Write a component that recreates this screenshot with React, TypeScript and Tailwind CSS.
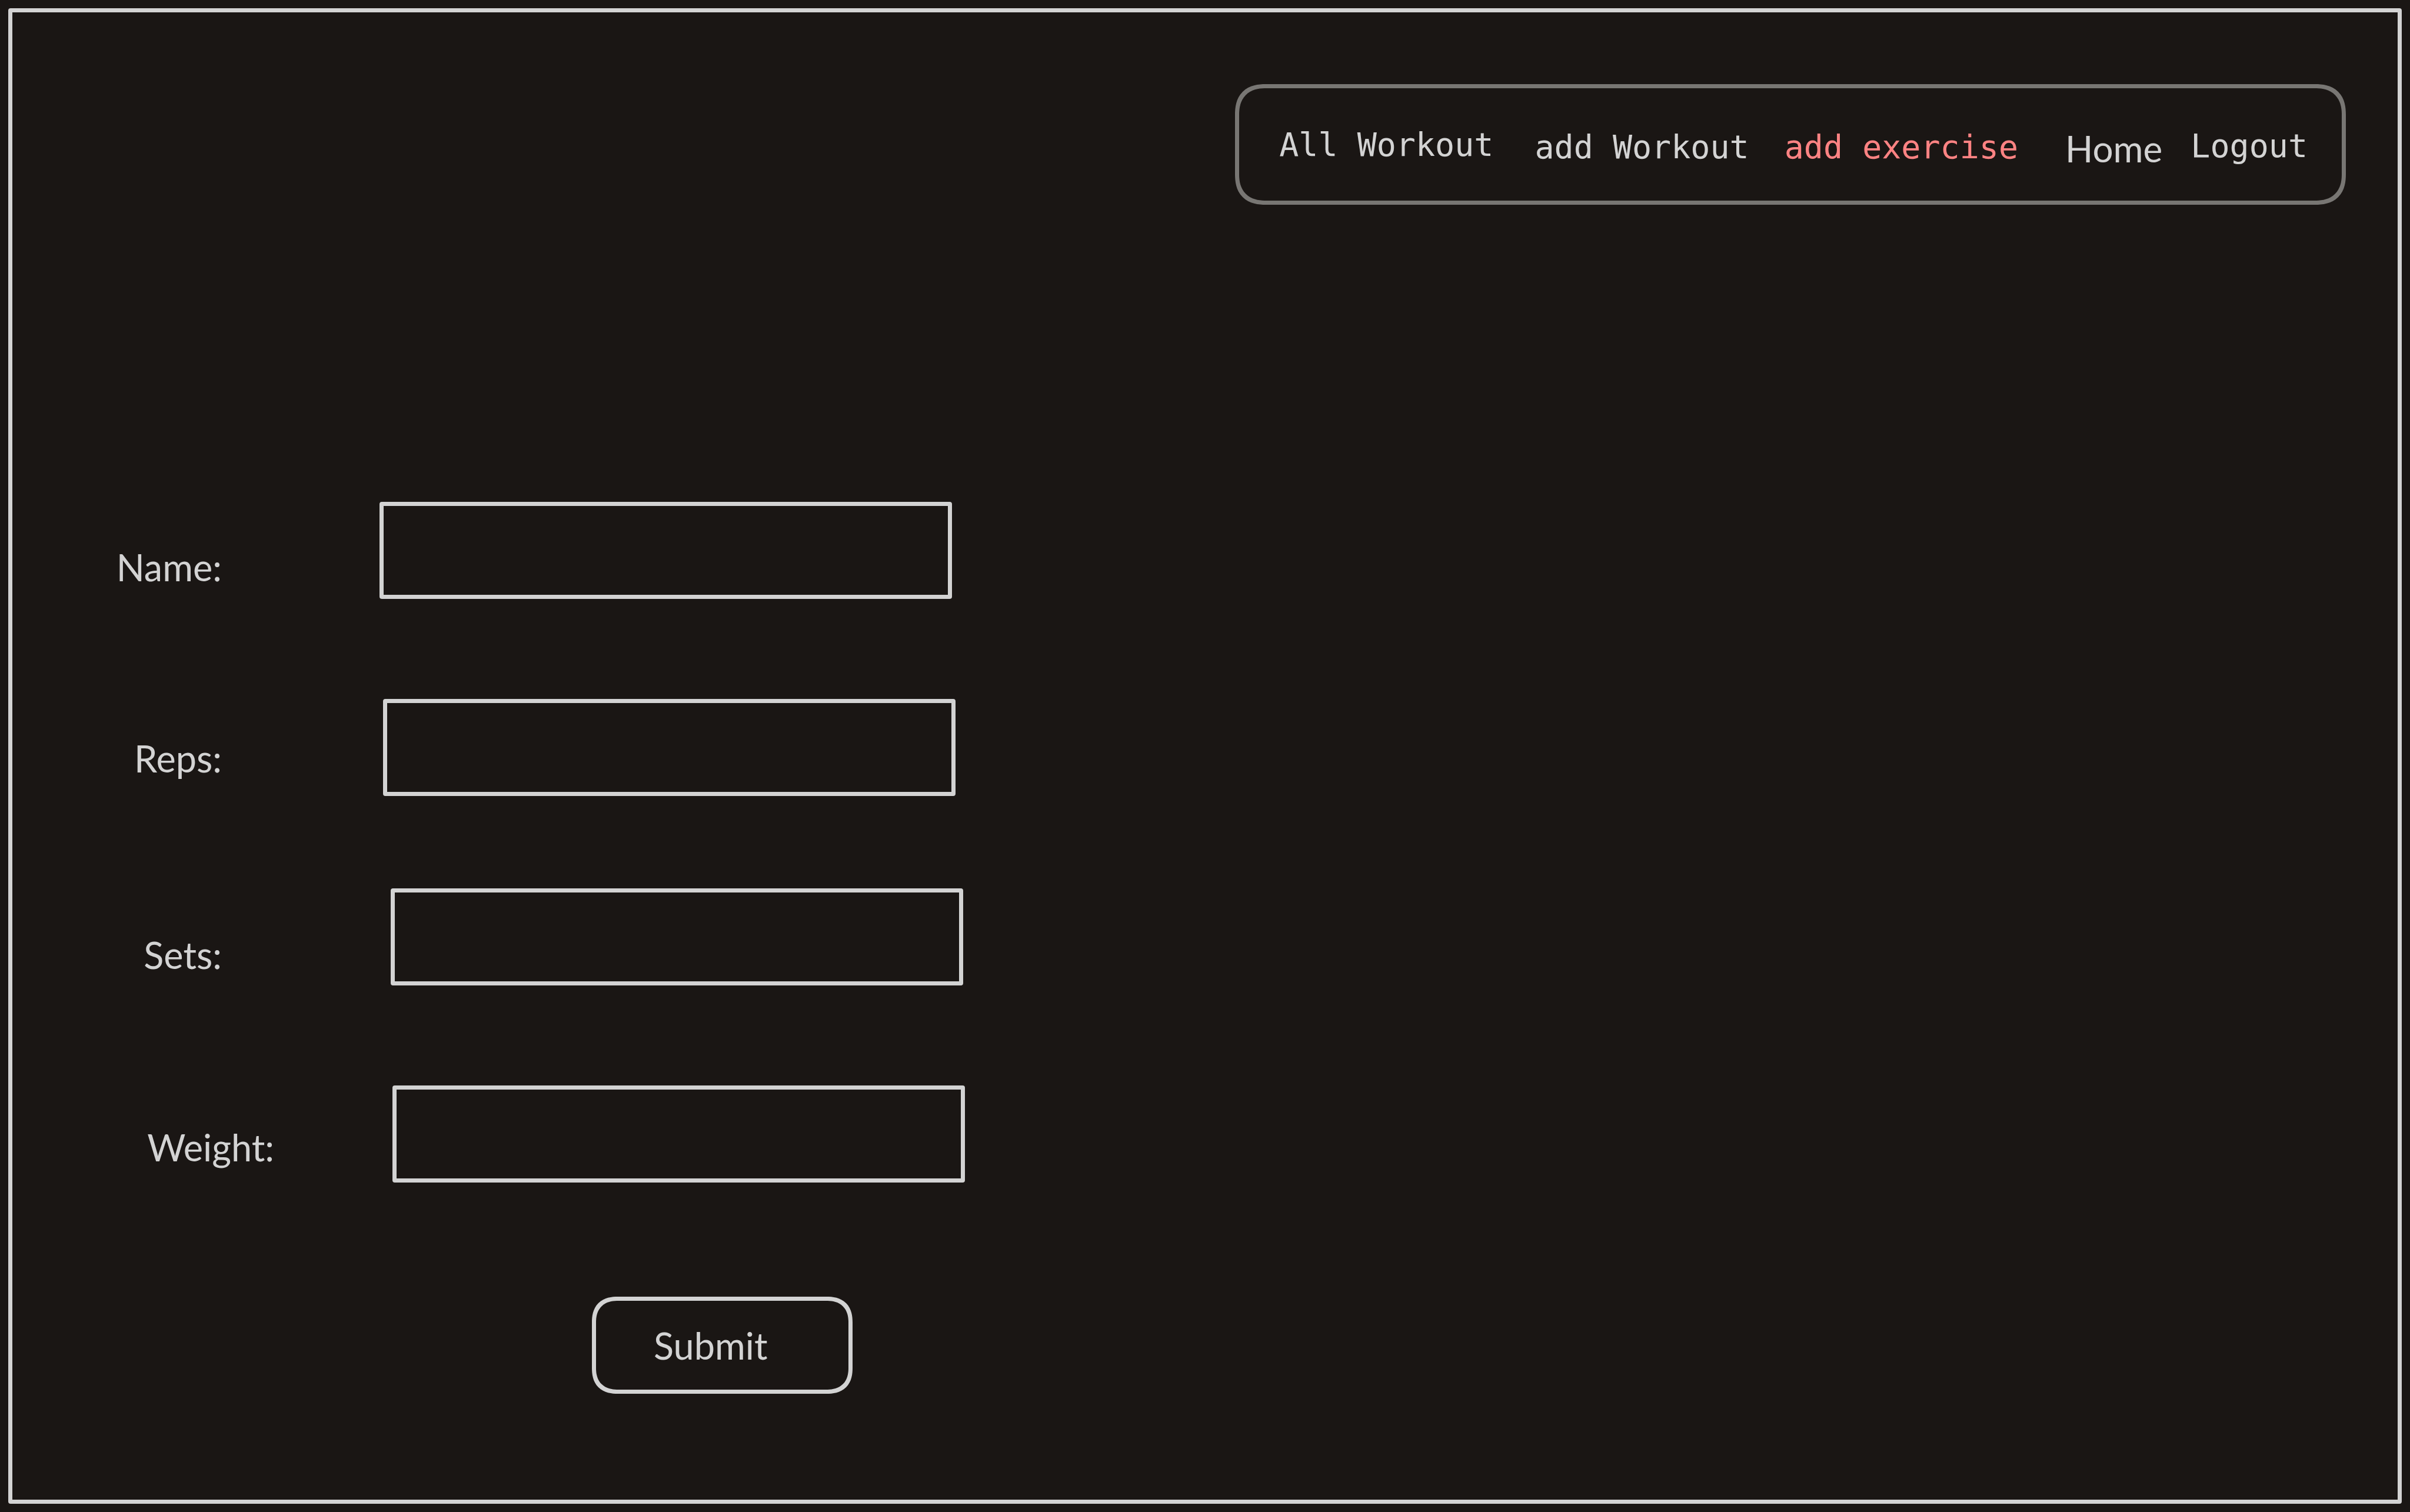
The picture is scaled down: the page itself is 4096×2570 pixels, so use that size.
const links = [
  { text: 'All Workout', className: 'font-[DejaVu_Sans_Mono,monospace] text-[55px]' },
  { text: 'add Workout', className: 'ml-[70px] pt-2 font-[DejaVu_Sans_Mono,monospace] text-[55px]' },
  {
    text: 'add exercise',
    active: true,
    className: 'ml-[60px] pt-2 font-[DejaVu_Sans_Mono,monospace] text-[55px] text-[#ff8383]',
  },
  { text: 'Home', className: 'ml-20 pt-3 text-[62px]' },
  { text: 'Logout', className: 'ml-12 pt-1 font-[DejaVu_Sans_Mono,monospace] text-[55px]' },
];

const fields = [
  { id: 'name', label: 'Name:', row: '', labelClass: 'w-[356px] pb-3.5', inputClass: 'ml-[268px]' },
  { id: 'reps', label: 'Reps:', row: 'mt-[170px]', labelClass: 'w-[356px] pb-6', inputClass: 'ml-[274px]' },
  { id: 'sets', label: 'Sets:', row: 'mt-[157px]', labelClass: 'w-[356px] pb-3', inputClass: 'ml-[287px]' },
  { id: 'weight', label: 'Weight:', row: 'mt-[170px]', labelClass: 'w-[445px] pb-5', inputClass: 'ml-[201px]' },
];

function NavBar() {
  return (
    <header className="flex justify-end pt-[122px] pr-[88px]">
      <nav className="flex h-[205px] items-center rounded-[52px] border-[7px] border-[#787673] pr-[58px] pl-[68px] leading-[80px] whitespace-nowrap [corner-shape:superellipse(1.27)]">
        {links.map((link) => (
          <a key={link.text} href="#" aria-current={link.active ? 'page' : undefined} className={link.className}>
            {link.text}
          </a>
        ))}
      </nav>
    </header>
  );
}

function ExerciseForm() {
  return (
    <form className="mt-[505px] text-[63px] leading-[80px]" onSubmit={(e) => e.preventDefault()}>
      {fields.map((f) => (
        <div key={f.id} className={`flex items-end ${f.row}`}>
          <label htmlFor={f.id} className={`shrink-0 text-right ${f.labelClass}`}>
            {f.label}
          </label>
          <input
            id={f.id}
            name={f.id}
            type="text"
            className={`h-[165px] w-[24%] rounded-[4px] border-[7px] border-[#d3d3d3] bg-transparent px-8 outline-none ${f.inputClass}`}
          />
        </div>
      ))}
      <button
        type="submit"
        className="mt-[194px] ml-[985px] block h-[165px] w-[443px] rounded-[44px] border-[7px] border-[#d3d3d3] pl-[98px] text-left [corner-shape:superellipse(1.27)]"
      >
        Submit
      </button>
    </form>
  );
}

export default function App() {
  return (
    <div className="flex min-h-screen flex-col bg-[#1a1614] p-3.5 font-[Lato,sans-serif] text-[#d3d3d3]">
      <main className="grow rounded-[4px] border-[7px] border-[#d3d3d3]">
        <NavBar />
        <ExerciseForm />
      </main>
    </div>
  );
}
